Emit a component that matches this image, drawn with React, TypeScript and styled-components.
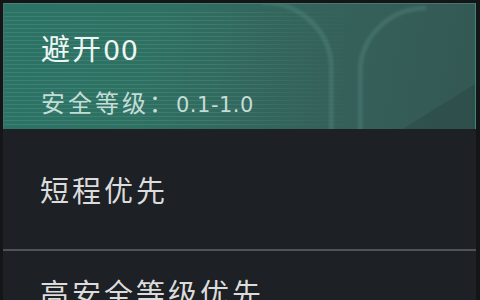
import React from "react";
import styled, { createGlobalStyle } from "styled-components";

const Global = createGlobalStyle`
  html, body { margin: 0; padding: 0; background: #121416; }
  body { font-family: "Noto Sans CJK SC", "Noto Sans", sans-serif; }
`;

const Screen = styled.div`
  width: 480px;
  height: 300px;
  overflow: hidden;
  box-sizing: border-box;
  padding: 3px 4px 0 3px;
  background: #131517;
`;

const Panel = styled.div`
  display: flex;
  flex-direction: column;
  background: #1d2024;
  height: 100%;
  overflow: hidden;
`;

const HeaderCard = styled.div`
  position: relative;
  flex-shrink: 0;
  height: 126px;
  box-sizing: border-box;
  padding: 26px 0 0 37px;
  overflow: hidden;
  border: 1px solid rgba(110, 170, 158, 0.35);
  border-bottom: none;
  background: linear-gradient(
    100deg,
    #2c7365 0%,
    #2e7163 30%,
    #33665c 55%,
    #355f59 75%,
    #345853 100%
  );

  &::before {
    content: "";
    position: absolute;
    left: 0;
    right: 0;
    top: 8px;
    bottom: 4px;
    background: repeating-linear-gradient(
      to bottom,
      rgba(170, 230, 215, 0.12) 0px,
      rgba(170, 230, 215, 0.12) 1px,
      transparent 1px,
      transparent 4px
    );
    -webkit-mask-image: linear-gradient(to right, #000 0%, #000 45%, transparent 75%);
    mask-image: linear-gradient(to right, #000 0%, #000 45%, transparent 75%);
    pointer-events: none;
  }
`;

const Decoration = styled.svg`
  position: absolute;
  inset: 0;
  width: 100%;
  height: 100%;
  pointer-events: none;
`;

const Title = styled.div`
  position: relative;
  font-size: 29px;
  line-height: 34px;
  letter-spacing: 2px;
  color: #eef6f3;
`;

const Subtitle = styled.div`
  position: relative;
  margin-top: 20px;
  font-size: 24px;
  line-height: 28px;
  letter-spacing: 3px;
  color: #c3ddd6;
`;

const Num = styled.span<{ $size?: number }>`
  font-family: "DejaVu Sans", sans-serif;
  font-size: ${(p) => p.$size ?? 21}px;
  letter-spacing: 0.5px;
`;

const List = styled.div`
  display: flex;
  flex-direction: column;
  flex-shrink: 0;
`;

const Item = styled.div<{ $top?: number }>`
  height: 122px;
  flex-shrink: 0;
  display: flex;
  align-items: ${(p) => (p.$top !== undefined ? "flex-start" : "center")};
  padding-top: ${(p) => p.$top ?? 0}px;
  padding-left: 37px;
  box-sizing: border-box;
  font-size: 29px;
  letter-spacing: 3px;
  color: #dcdcdc;
  border-bottom: 2px solid #4f5256;
`;

export default function App() {
  return (
    <>
      <Global />
      <Screen>
        <Panel>
          <HeaderCard>
            <Decoration viewBox="0 0 472 125" preserveAspectRatio="none">
              <defs>
                <filter id="soft" x="-10%" y="-10%" width="120%" height="120%">
                  <feGaussianBlur stdDeviation="0.8" />
                </filter>
              </defs>
              <g filter="url(#soft)" fill="none" stroke="rgba(130,190,178,0.16)" strokeWidth="5">
                <path d="M258 -2 A70 66 0 0 1 328 64 L328 130" />
                <path d="M357 130 L357 68 A66 64 0 0 1 423 4" />
              </g>
              <polygon points="398,126 472,80 472,126" fill="rgba(20,30,30,0.16)" />
            </Decoration>
            <Title>
              避开<Num $size={27}>00</Num>
            </Title>
            <Subtitle>
              安全等级：<Num>0.1-1.0</Num>
            </Subtitle>
          </HeaderCard>
          <List>
            <Item>短程优先</Item>
            <Item $top={20}>高安全等级优先</Item>
          </List>
        </Panel>
      </Screen>
    </>
  );
}
